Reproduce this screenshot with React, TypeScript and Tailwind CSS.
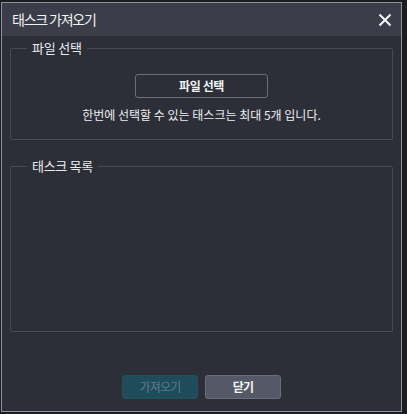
import React from "react";

const font = { fontFamily: '"Noto Sans CJK KR", "Noto Sans", sans-serif' };

export default function App() {
  return (
    <div className="w-[407px] h-[414px] bg-[#1b1c21] overflow-hidden pt-[2px] pl-[1px]" style={font}>
      <div className="w-[401px] h-[410px] border border-[#8e929c] flex flex-col bg-[#2c2f38]">
        <div className="h-[33px] bg-[#3b3e49] flex items-center justify-between pl-[10px] pr-[9px]">
          <span className="text-[14px] tracking-[-1.2px] text-[#f2f3f5]">태스크 가져오기</span>
          <svg width="14" height="14" viewBox="0 0 14 14">
            <path d="M1.5 1.5 L12.5 12.5 M12.5 1.5 L1.5 12.5" stroke="#f4f5f7" strokeWidth="2" fill="none" />
          </svg>
        </div>
        <div className="flex-1 flex flex-col px-[8px] pt-[2px]">
          <fieldset className="border border-[#474a55] rounded-[2px] h-[102px] px-[16px] flex flex-col items-center">
            <legend className="px-[5px] text-[13px] leading-[20px] tracking-[-0.2px] text-[#e9eaee]">파일 선택</legend>
            <button className="mt-[16px] w-[133px] h-[24px] border border-[#6c707b] rounded-[3px] text-[12px] font-bold tracking-[-0.4px] text-[#f2f3f5] bg-[#2c2f38] leading-none">
              파일 선택
            </button>
            <p className="mt-[9px] text-[12px] tracking-[0px] text-[#eceef1] leading-[16px] whitespace-nowrap">
              한번에 선택할 수 있는 태스크는 최대 5개 입니다.
            </p>
          </fieldset>
          <fieldset className="mt-[16px] border border-[#474a55] rounded-[2px] h-[176px] px-[16px]">
            <legend className="px-[5px] text-[13px] leading-[20px] tracking-[-0.3px] text-[#e9eaee]">태스크 목록</legend>
          </fieldset>
          <div className="mt-[43px] flex justify-center gap-[7px]">
            <button className="w-[76px] h-[24px] rounded-[3px] bg-[#1f4b5b] border border-[#23515f] text-[12px] tracking-[-0.8px] text-[#5d7e89] leading-none">
              가져오기
            </button>
            <button className="w-[76px] h-[24px] rounded-[3px] bg-[#555967] border border-[#6a6e7a] text-[12px] tracking-[-0.8px] text-[#f4f5f7] font-bold leading-none">
              닫기
            </button>
          </div>
        </div>
      </div>
    </div>
  );
}
